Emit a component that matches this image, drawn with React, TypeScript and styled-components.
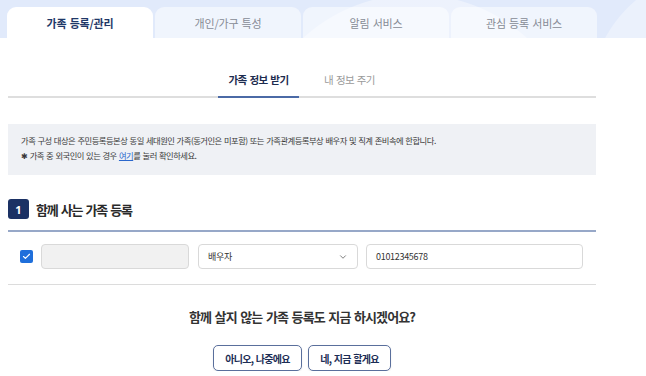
import React from "react";
import styled, { createGlobalStyle } from "styled-components";
import { ChevronDown, Check } from "lucide-react";

const Global = createGlobalStyle`
  html, body { margin: 0; padding: 0; background: #fff; }
  body { font-family: "Noto Sans CJK KR", "Noto Sans", sans-serif; color: #333; }
  * { box-sizing: border-box; }
`;

const Header = styled.div`
  height: 38px;
  display: flex;
  align-items: flex-end;
  gap: 2px;
  padding-left: 7px;
  background:
    radial-gradient(circle at 415px 160px, rgba(255,255,255,0.4) 0 165px, transparent 166px),
    radial-gradient(circle at 720px 100px, rgba(255,255,255,0.35) 0 130px, transparent 131px),
    #e1eafb;
`;

const TopTab = styled.div<{ $active?: boolean }>`
  width: 146px;
  height: 31px;
  border-radius: 9px 9px 0 0;
  display: flex;
  align-items: center;
  justify-content: center;
  padding-top: 1px;
  font-size: 11px;
  letter-spacing: -0.2px;
  word-spacing: 1px;
  font-weight: ${(p) => (p.$active ? 700 : 400)};
  color: ${(p) => (p.$active ? "#1f3868" : "#868b95")};
  background: ${(p) => (p.$active ? "#ffffff" : "rgba(255,255,255,0.5)")};
`;

const Main = styled.div`
  width: 588px;
  margin-left: 8px;
`;

const SubTabBar = styled.div`
  display: flex;
  justify-content: center;
  gap: 10px;
  padding: 24px 0 0 4px;
  border-bottom: 2px solid #dedede;
`;

const SubTab = styled.div<{ $active?: boolean }>`
  width: 81px;
  height: 36px;
  line-height: 35px;
  text-align: center;
  font-size: 10.5px;
  letter-spacing: -0.6px;
  word-spacing: 1px;
  font-weight: ${(p) => (p.$active ? 700 : 400)};
  color: ${(p) => (p.$active ? "#1d2c4f" : "#9a9a9a")};
  border-bottom: 2px solid ${(p) => (p.$active ? "#4b6aa6" : "transparent")};
  margin-bottom: -2px;
`;

const InfoBox = styled.div`
  margin-top: 26px;
  height: 51px;
  background: #eff1f5;
  padding: 9px 13px 0;
  font-size: 8.3px;
  line-height: 15px;
  letter-spacing: -0.5px;
  word-spacing: 0.8px;
  color: #3a3a3a;
`;

const InfoLine = styled.div``;

const Link = styled.a`
  color: #2a67cc;
  text-decoration: underline;
`;

const SectionHead = styled.div`
  margin-top: 24px;
  display: flex;
  align-items: center;
  gap: 7px;
  height: 20px;
  margin-bottom: 11px;
`;

const Badge = styled.div`
  width: 21px;
  height: 20px;
  border-radius: 3px;
  background: #1b3164;
  color: #fff;
  font-size: 11px;
  font-weight: 700;
  display: flex;
  align-items: center;
  justify-content: center;
  font-family: "Noto Sans", sans-serif;
`;

const SectionTitle = styled.div`
  font-size: 13px;
  font-weight: 700;
  letter-spacing: -1.2px;
  word-spacing: 1.5px;
  color: #2a2a2a;
`;

const FormRow = styled.div`
  border-top: 2px solid #97a8c8;
  border-bottom: 1px solid #dcdcdc;
  padding: 12px 0 15px 12px;
  display: flex;
  align-items: center;
`;

const CheckBox = styled.div`
  width: 13px;
  height: 13px;
  border-radius: 2px;
  background: #1f6fdb;
  display: flex;
  align-items: center;
  justify-content: center;
  margin-right: 8px;
`;

const Field = styled.div<{ $w: number; $disabled?: boolean; $gap?: number }>`
  width: ${(p) => p.$w}px;
  height: 25px;
  margin-right: ${(p) => p.$gap ?? 0}px;
  border: 1px solid #d9d9d9;
  border-radius: 4px;
  background: ${(p) => (p.$disabled ? "#f1f1f1" : "#fff")};
  display: flex;
  align-items: center;
  justify-content: space-between;
  padding: 0 9px;
  font-size: 9px;
  letter-spacing: -0.3px;
  color: #333;
`;

const Question = styled.div`
  margin-top: 23px;
  text-align: center;
  font-size: 13px;
  line-height: 17px;
  font-weight: 700;
  letter-spacing: -0.9px;
  word-spacing: 1.5px;
  color: #333;
`;

const ButtonRow = styled.div`
  margin-top: 20px;
  display: flex;
  justify-content: center;
  gap: 6px;
`;

const Button = styled.button<{ $w: number }>`
  width: ${(p) => p.$w}px;
  height: 26px;
  border: 1.5px solid #5a6f9c;
  border-radius: 5px;
  background: #fff;
  color: #1c2d55;
  font-family: inherit;
  font-size: 10px;
  font-weight: 700;
  letter-spacing: -0.7px;
  word-spacing: 1px;
  padding: 0;
  box-shadow: 0 1px 2px rgba(0,0,0,0.08);
`;

export default function App() {
  return (
    <>
      <Global />
      <Header>
        <TopTab $active>가족 등록/관리</TopTab>
        <TopTab>개인/가구 특성</TopTab>
        <TopTab>알림 서비스</TopTab>
        <TopTab>관심 등록 서비스</TopTab>
      </Header>
      <Main>
        <SubTabBar>
          <SubTab $active>가족 정보 받기</SubTab>
          <SubTab>내 정보 주기</SubTab>
        </SubTabBar>
        <InfoBox>
          <InfoLine>
            가족 구성 대상은 주민등록등본상 동일 세대원인 가족(동거인은 미포함) 또는 가족관계등록부상 배우자 및 직계 존비속에 한합니다.
          </InfoLine>
          <InfoLine>
            ✱ 가족 중 외국인이 있는 경우 <Link>여기</Link>를 눌러 확인하세요.
          </InfoLine>
        </InfoBox>
        <SectionHead>
          <Badge>1</Badge>
          <SectionTitle>함께 사는 가족 등록</SectionTitle>
        </SectionHead>
        <FormRow>
          <CheckBox>
            <Check size={9} color="#fff" strokeWidth={3} />
          </CheckBox>
          <Field $w={148} $gap={9} $disabled />
          <Field $w={160} $gap={8}>
            <span>배우자</span>
            <ChevronDown size={10} color="#666" />
          </Field>
          <Field $w={217}>01012345678</Field>
        </FormRow>
        <Question>함께 살지 않는 가족 등록도 지금 하시겠어요?</Question>
        <ButtonRow>
          <Button $w={89}>아니오, 나중에요</Button>
          <Button $w={83}>네, 지금 할게요</Button>
        </ButtonRow>
      </Main>
    </>
  );
}
